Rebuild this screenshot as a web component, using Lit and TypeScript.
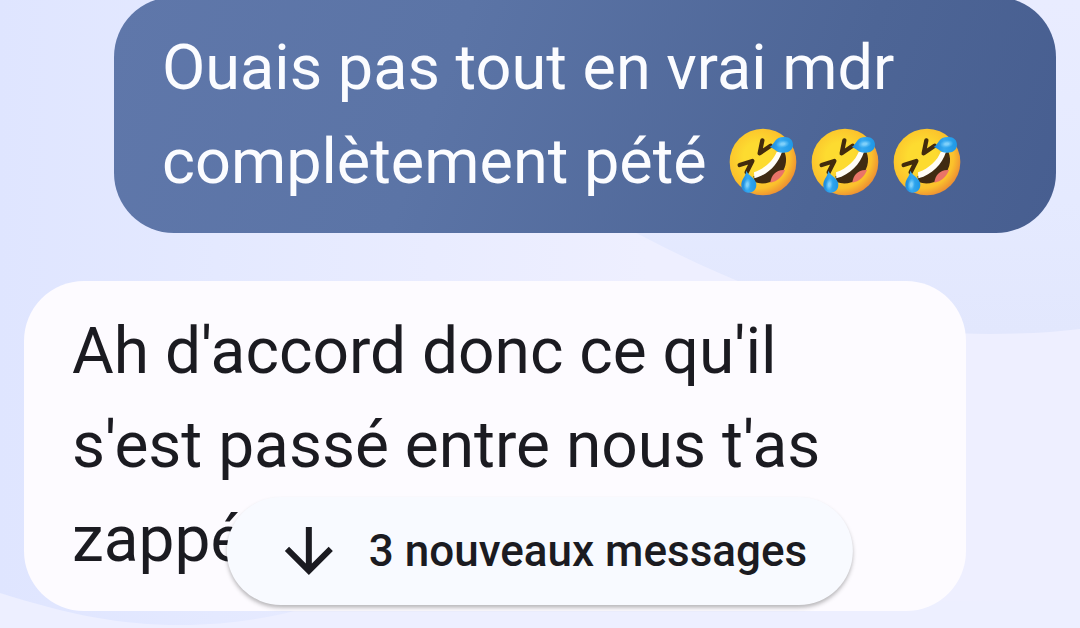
import { LitElement, html, css, svg } from "lit";
import { customElement, property } from "lit/decorators.js";

@customElement("laugh-emoji")
class LaughEmoji extends LitElement {
  static styles = css`
    :host { display: inline-block; width: 82px; height: 82px; vertical-align: -20px; }
    .face { display: block; width: 100%; height: 100%; }
  `;
  render() {
    return html`
      <svg class="face" viewBox="0 0 246 246" role="img" aria-label="🤣">
        <defs>
          <radialGradient id="skin" cx="0.42" cy="0.42" r="0.6">
            <stop offset="0.35" stop-color="#fddb30" />
            <stop offset="0.8" stop-color="#fbc02c" />
            <stop offset="1" stop-color="#ee9233" />
          </radialGradient>
          <linearGradient id="drop" x1="0" y1="0" x2="1" y2="0">
            <stop offset="0" stop-color="#1c88dc" />
            <stop offset="0.45" stop-color="#35a9f0" />
            <stop offset="1" stop-color="#1e97e6" />
          </linearGradient>
          <radialGradient id="shine">
            <stop offset="0.3" stop-color="#7fd0fa" />
            <stop offset="1" stop-color="#4ab6f4" stop-opacity="0.3" />
          </radialGradient>
        </defs>
        <circle cx="123" cy="123" r="100" fill="url(#skin)" />
        <path d="M187 92 C199 118 190 153 163 173 C142 189 116 190 98 183 L94 166 C130 156 160 128 171 96 Z" fill="#402b12" />
        <path d="M145 185 C147 162 164 144 189 147 C181 168 165 182 145 185Z" fill="#ea7468" />
        <path d="M96 154 C130 142 154 118 164 93 L180 93 C168 129 139 161 97 172 Z" fill="#fffdf7" />
        <path d="M121 58 L113 97 L146 74" fill="none" stroke="#422b0d" stroke-width="13" stroke-linecap="round" stroke-linejoin="round" />
        <path d="M53 132 L91 120 L74 154" fill="none" stroke="#422b0d" stroke-width="13" stroke-linecap="round" stroke-linejoin="round" />
        <path d="M143 78 C160 68 157 47 188 48 C203 48 213 57 213 72 C212 88 200 95 184 95 C162 96 158 82 143 78Z" fill="url(#drop)" />
        <path d="M73 149 C80 167 105 171 103 193 C102 208 92 215 80 215 C65 214 57 203 58 188 C61 171 70 168 73 149Z" fill="url(#drop)" />
        <ellipse cx="182" cy="69" rx="19" ry="11" fill="url(#shine)" transform="rotate(-8 182 69)" />
        <ellipse cx="76" cy="191" rx="10" ry="18" fill="url(#shine)" transform="rotate(8 76 191)" />
      </svg>`;
  }
}

@customElement("chat-bubble")
class ChatBubble extends LitElement {
  @property({ reflect: true }) side = "received";
  static styles = css`
    :host {
      display: block;
      box-sizing: border-box;
      width: calc(100% - 90px);
      padding: 24px 48px;
      border-radius: 60px;
      background: #fdfbff;
      color: #1b1b21;
      font-size: 64px;
      line-height: 94px;
    }
    :host([side="sent"]) {
      align-self: flex-end;
      background: linear-gradient(110deg, #5f77aa 0%, #5b74a6 35%, #4d6596 75%, #475e90 100%);
      color: #fbfcff;
      font-size: 63px;
    }
  `;
  render() {
    return html`<slot></slot>`;
  }
}

@customElement("app-root")
class AppRoot extends LitElement {
  static styles = css`
    :host {
      display: block;
      position: relative;
      min-height: 100vh;
      overflow: hidden;
      background: #edeffe;
      font-family: Roboto, "Noto Sans", sans-serif;
    }
    .wallpaper { position: absolute; inset: 0; width: 100%; height: 100%; }
    .thread {
      position: relative;
      display: flex;
      flex-direction: column;
      gap: 48px;
      margin-top: -3px;
      padding: 0 24px 16px;
    }
    .text { margin: 0; }
    .new-messages {
      position: absolute;
      left: 50%;
      bottom: 23px;
      transform: translateX(-50%);
      display: flex;
      align-items: center;
      gap: 24px;
      height: 108px;
      padding: 0 46px;
      border: 0;
      border-radius: 54px;
      background: #f8faff;
      color: #1b1b21;
      box-shadow: 0 3px 4px rgba(0, 0, 0, 0.22), 0 2px 3px rgba(0, 0, 0, 0.06);
      font-family: inherit;
      font-size: 44px;
      font-weight: 500;
      line-height: 60px;
      white-space: nowrap;
      cursor: pointer;
    }
    .arrow { width: 72px; height: 72px; flex: none; }
  `;

  private wallpaper() {
    return svg`
      <defs>
        <linearGradient id="base" x1="0" y1="0" x2="1" y2="0">
          <stop offset="0" stop-color="#dfe5ff" />
          <stop offset="0.2" stop-color="#e4e9ff" />
          <stop offset="0.6" stop-color="#eeefff" />
        </linearGradient>
        <linearGradient id="wave" x1="0" y1="0" x2="0" y2="1">
          <stop offset="0" stop-color="#e9ecff" />
          <stop offset="0.6" stop-color="#e5eaff" />
          <stop offset="1" stop-color="#e2e7fd" />
        </linearGradient>
      </defs>
      <rect width="1080" height="628" fill="url(#base)" />
      <path d="M540 180 C690 265 820 334 990 334 C1025 334 1055 332 1080 329 V0 H540Z" fill="url(#wave)" />
      <path d="M0 593 C70 615 120 625 180 625 C230 625 270 618 310 607 L1080 600 V628 H0Z" fill="#edefff" />`;
  }

  render() {
    return html`
      <svg class="wallpaper" viewBox="0 0 1080 628" preserveAspectRatio="none" aria-hidden="true">${this.wallpaper()}</svg>
      <main class="thread">
        <chat-bubble side="sent">
          <p class="text">Ouais pas tout en vrai mdr<br />complètement pété <laugh-emoji></laugh-emoji><laugh-emoji></laugh-emoji><laugh-emoji></laugh-emoji></p>
        </chat-bubble>
        <chat-bubble side="received">
          <p class="text">Ah d'accord donc ce qu'il<br />s'est passé entre nous t'as<br />zappé</p>
        </chat-bubble>
      </main>
      <button class="new-messages" type="button">
        <svg class="arrow" viewBox="0 0 24 24" fill="currentColor" aria-hidden="true">
          <path d="M11 4V16.175L5.4 10.575L4 12L12 20L20 12L18.6 10.575L13 16.175V4Z" />
        </svg>
        3 nouveaux messages
      </button>`;
  }
}
